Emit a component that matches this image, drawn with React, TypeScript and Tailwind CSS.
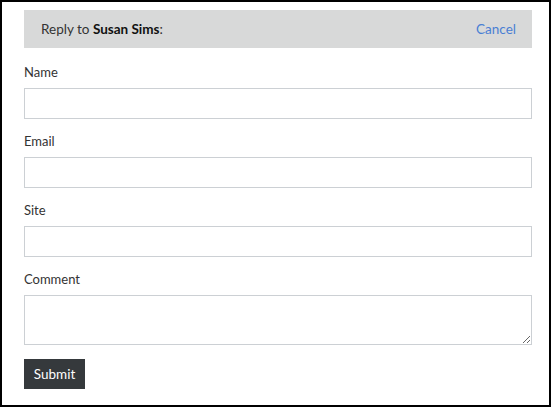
const Field = ({ label, textarea }: { label: string; textarea?: boolean }) => (
  <div className="flex flex-col">
    <label className="h-5 leading-5 text-[13px] text-[#333]">{label}</label>
    {textarea ? (
      <textarea className="mt-[6px] h-[50px] w-full border border-[#ccd0d4] bg-white outline-none" />
    ) : (
      <input className="mt-[6px] h-[31px] w-full border border-[#ccd0d4] bg-white outline-none" />
    )}
  </div>
);

const App = () => {
  return (
    <div
      className="w-[551px] h-[407px] border-2 border-black bg-white pl-[22px] pr-[17px] pt-2"
      style={{ fontFamily: 'Lato, "Noto Sans", sans-serif' }}
    >
      {/* Reply header */}
      <div className="flex h-[38px] items-center justify-between bg-[#d8d9d9] pl-[17px] pr-4 text-[13.5px] text-[#333]">
        <span>
          Reply to <b className="font-bold text-[#111]">Susan Sims</b>:
        </span>
        <a href="#" className="text-[#4a7fd4]">
          Cancel
        </a>
      </div>

      <div className="mt-[14px] flex flex-col gap-3">
        <Field label="Name" />
        <Field label="Email" />
        <Field label="Site" />
        <Field label="Comment" textarea />
      </div>

      <button className="mt-[14px] h-[30px] w-[61px] bg-[#35393c] text-[13.5px] text-white">
        Submit
      </button>
    </div>
  );
};

export default App;
